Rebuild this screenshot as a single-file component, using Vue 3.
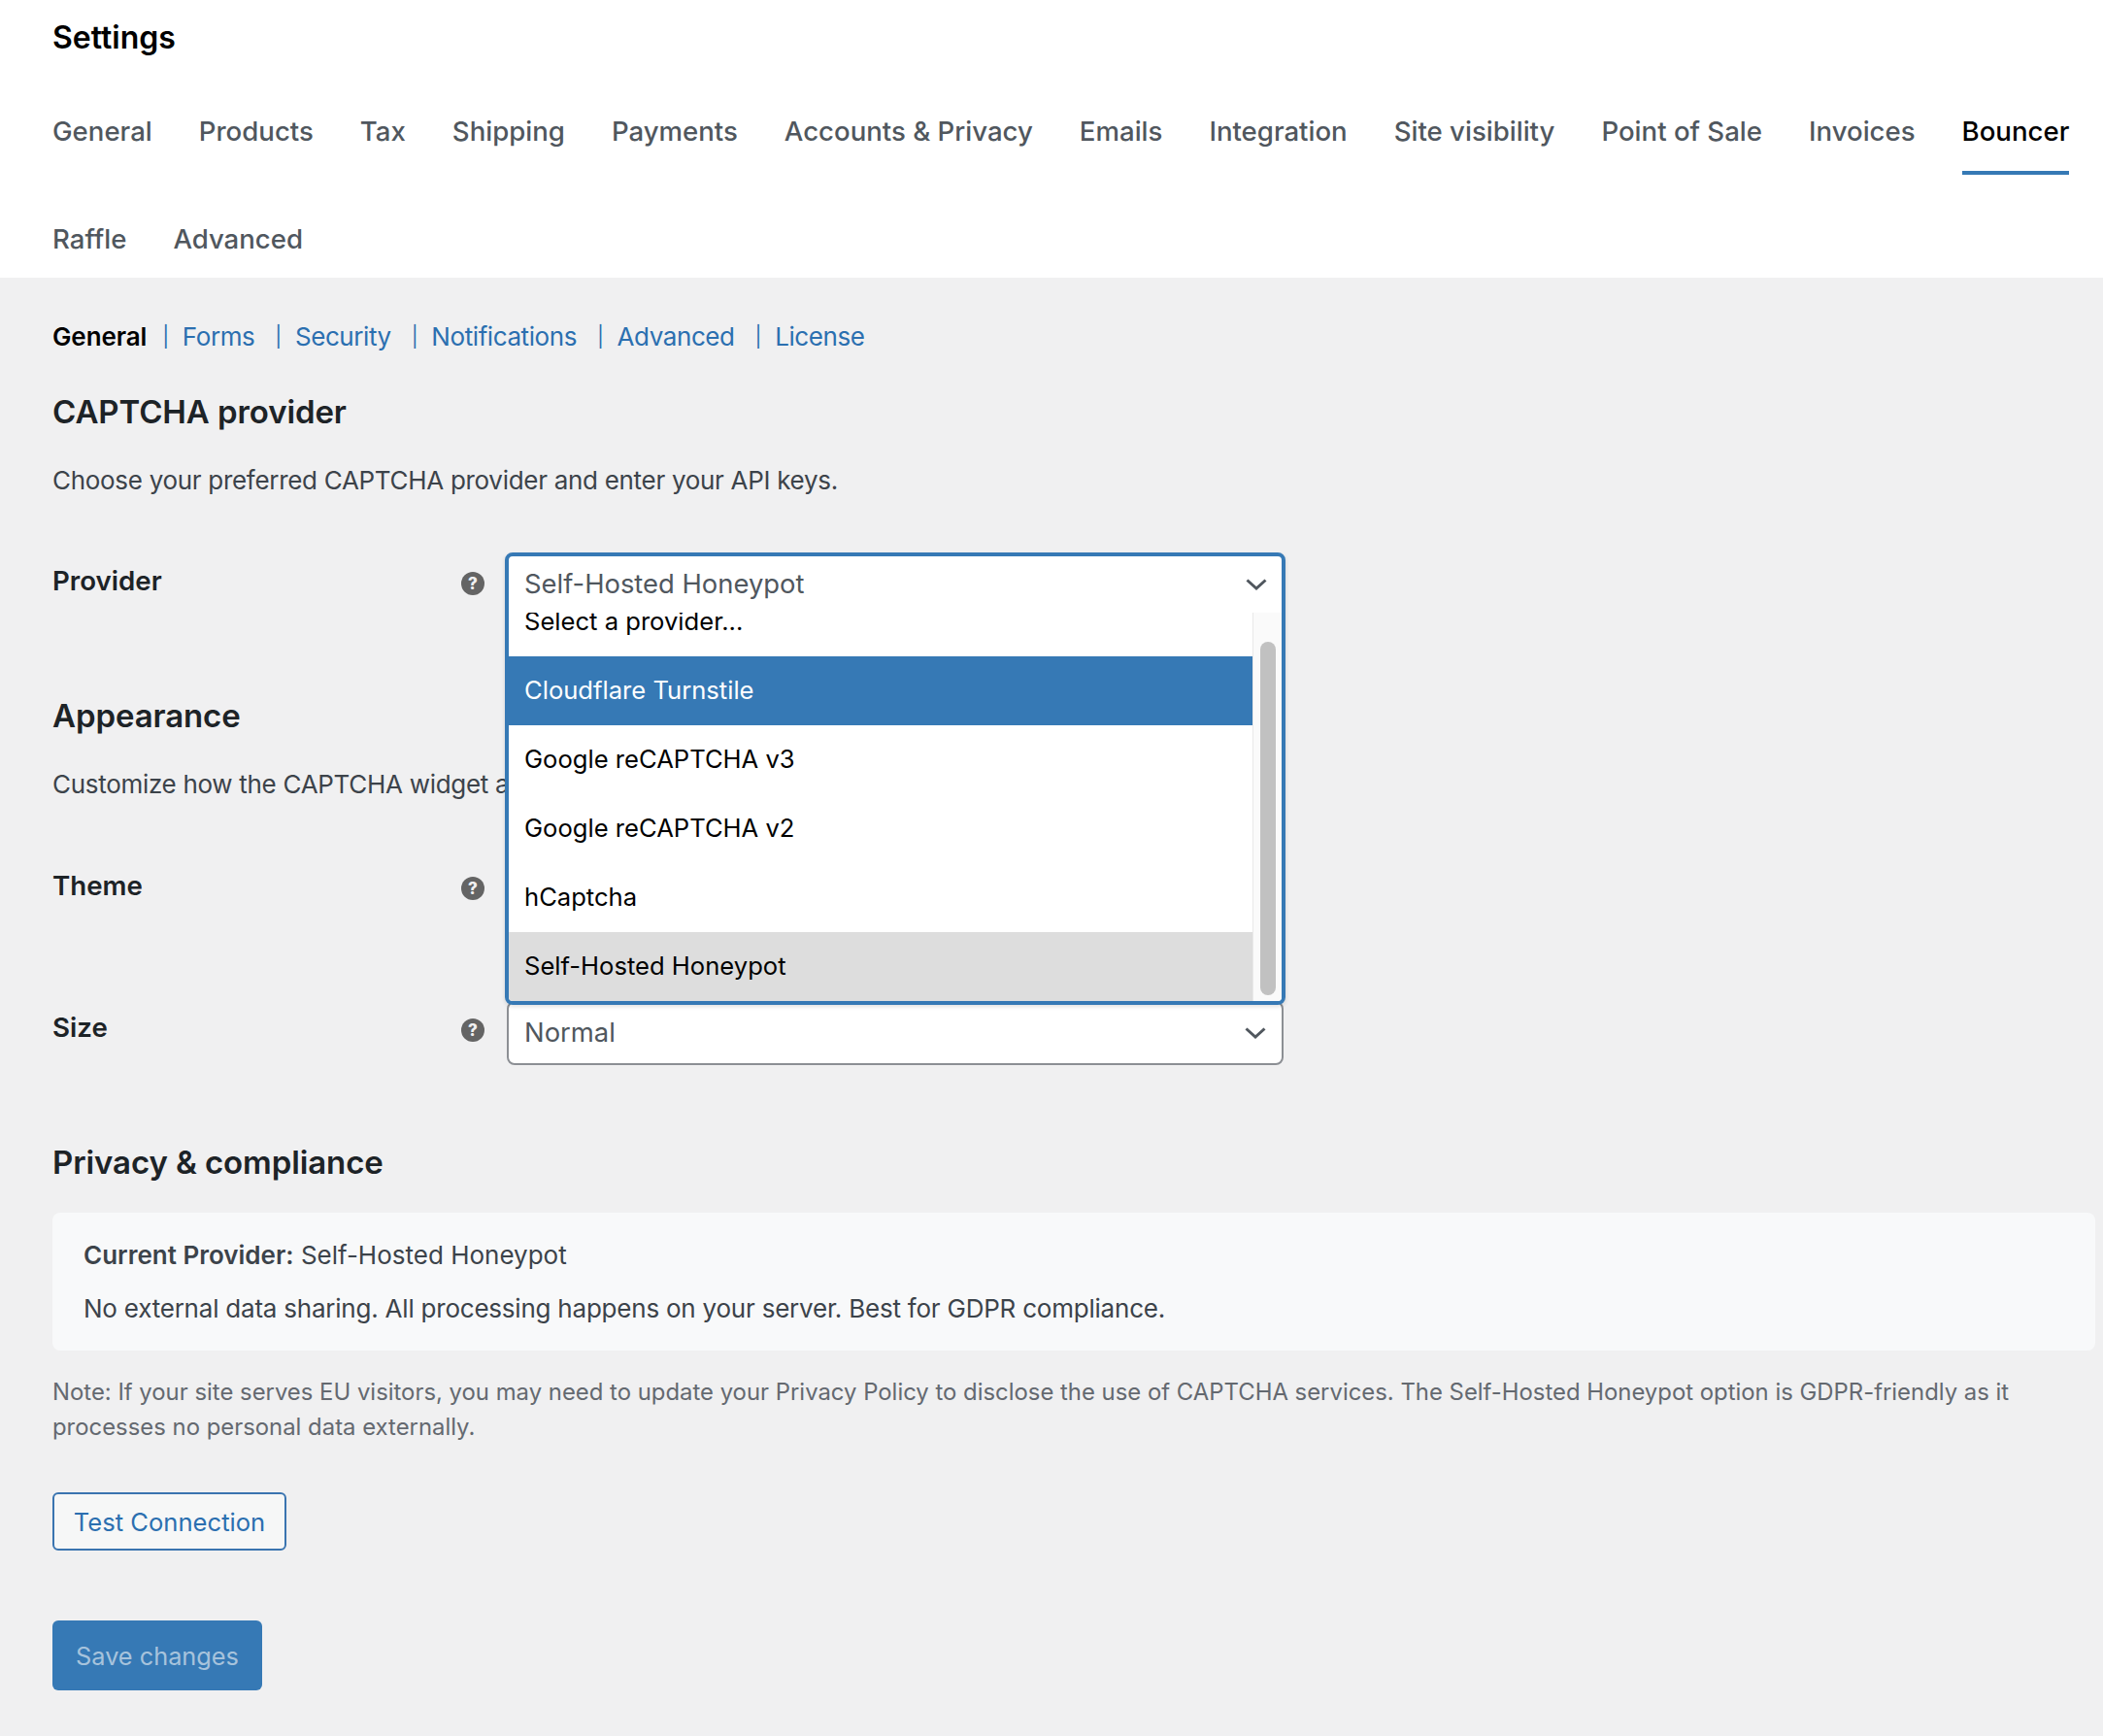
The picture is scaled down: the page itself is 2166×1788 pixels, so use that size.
<template>
  <div class="page">
    <header class="top">
      <h1 class="title">Settings</h1>
      <nav class="tabs">
        <a v-for="tab in tabs" :key="tab" class="tab" :class="{ active: tab === 'Bouncer' }">{{ tab }}</a>
      </nav>
    </header>

    <main class="content">
      <div class="subnav">
        <template v-for="(item, index) in subTabs" :key="item">
          <span v-if="index > 0" class="sep">|</span>
          <a :class="{ current: index === 0 }">{{ item }}</a>
        </template>
      </div>

      <h2 class="h-first">CAPTCHA provider</h2>
      <p class="desc">Choose your preferred CAPTCHA provider and enter your API keys.</p>

      <div class="row row-provider">
        <label class="label">Provider</label>
        <span class="help">?</span>
        <div class="field">
          <div class="select">
            <span>Self-Hosted Honeypot</span>
            <svg class="chev" viewBox="0 0 22 12"><polyline points="1.5,1.5 11,10 20.5,1.5" /></svg>
          </div>
          <!-- open list sits over the rows below -->
          <div class="dropdown">
            <div class="dd-head">
              <span>Self-Hosted Honeypot</span>
              <svg class="chev" viewBox="0 0 22 12"><polyline points="1.5,1.5 11,10 20.5,1.5" /></svg>
            </div>
            <div class="dd-body">
              <ul class="options">
                <li
                  v-for="opt in providers"
                  :key="opt"
                  :class="{ hover: opt === 'Cloudflare Turnstile', chosen: opt === 'Self-Hosted Honeypot' }"
                >{{ opt }}</li>
              </ul>
              <div class="track"><div class="thumb"></div></div>
            </div>
          </div>
        </div>
      </div>

      <h2 class="h-appearance">Appearance</h2>
      <p class="desc desc-2">Customize how the CAPTCHA widget appears on your site.</p>

      <div class="row row-theme">
        <label class="label">Theme</label>
        <span class="help">?</span>
        <div class="field">
          <div class="select">
            <span>Auto</span>
            <svg class="chev" viewBox="0 0 22 12"><polyline points="1.5,1.5 11,10 20.5,1.5" /></svg>
          </div>
        </div>
      </div>

      <div class="row row-size">
        <label class="label">Size</label>
        <span class="help">?</span>
        <div class="field">
          <div class="select">
            <span>Normal</span>
            <svg class="chev" viewBox="0 0 22 12"><polyline points="1.5,1.5 11,10 20.5,1.5" /></svg>
          </div>
        </div>
      </div>

      <h2 class="h-privacy">Privacy &amp; compliance</h2>
      <div class="notice">
        <p class="current-line"><strong>Current Provider:</strong> Self-Hosted Honeypot</p>
        <p>No external data sharing. All processing happens on your server. Best for GDPR compliance.</p>
      </div>
      <p class="note">
        Note: If your site serves EU visitors, you may need to update your Privacy Policy to disclose the use of CAPTCHA services. The Self-Hosted Honeypot option is GDPR-friendly as it processes no personal data externally.
      </p>

      <button class="btn-test" type="button">Test Connection</button>
      <button class="btn-save" type="button">Save changes</button>
    </main>
  </div>
</template>

<script setup>
const tabs = [
  "General",
  "Products",
  "Tax",
  "Shipping",
  "Payments",
  "Accounts & Privacy",
  "Emails",
  "Integration",
  "Site visibility",
  "Point of Sale",
  "Invoices",
  "Bouncer",
  "Raffle",
  "Advanced",
];

const subTabs = ["General", "Forms", "Security", "Notifications", "Advanced", "License"];

const providers = [
  "Select a provider...",
  "Cloudflare Turnstile",
  "Google reCAPTCHA v3",
  "Google reCAPTCHA v2",
  "hCaptcha",
  "Self-Hosted Honeypot",
];
</script>

<style>
html,
body {
  margin: 0;
  background: #f0f0f1;
}
</style>

<style scoped>
.page {
  min-height: 1788px;
  background: #f0f0f1;
  color: #3c434a;
  font-family: Inter, "Liberation Sans", sans-serif;
  font-size: 26px;
}

.top {
  height: 286px;
  box-sizing: border-box;
  padding: 0 20px 0 54px;
  background: #fff;
}

.title {
  margin: 0;
  height: 78px;
  line-height: 78px;
  font-size: 32px;
  font-weight: 600;
  color: #000;
}

.tabs {
  display: flex;
  flex-wrap: wrap;
  column-gap: 48px;
  row-gap: 22px;
  margin-top: 13px;
}

.tab {
  height: 89px;
  line-height: 89px;
  font-size: 27.58px;
  font-weight: 500;
  color: #50575e;
}

.tab.active {
  color: #000;
  height: 85px;
  border-bottom: 4px solid #3679b5;
}

.content {
  padding: 43px 8px 0 54px;
}

.subnav {
  display: flex;
  align-items: center;
  height: 36px;
  line-height: 36px;
  font-size: 26px;
  letter-spacing: -0.42px;
  color: #2b6fb0;
}

.subnav .current {
  margin-right: -5px;
  color: #000;
  font-weight: 600;
  letter-spacing: -0.1px;
}

.sep {
  margin: 0 14px 0 21px;
  font-size: 21px;
}

h2 {
  margin: 0;
  height: 44px;
  line-height: 44px;
  font-size: 33px;
  font-weight: 600;
  letter-spacing: -0.1px;
  color: #1d2327;
}

.h-first {
  margin-top: 37px;
}

.h-appearance {
  margin-top: 78px;
}

.h-privacy {
  margin-top: 78px;
}

.desc {
  margin: 29px 0 0;
  line-height: 40px;
  font-size: 26px;
  letter-spacing: -0.3px;
  color: #3c434a;
}

.desc-2 {
  margin-top: 29px;
}

.row {
  display: flex;
  height: 66px;
  position: relative;
}

.row-provider {
  margin-top: 56px;
}

.row-theme {
  margin-top: 57px;
}

.row-size {
  margin-top: 80px;
}

.label {
  width: 421px;
  padding-top: 6.5px;
  line-height: 40px;
  font-size: 27.7px;
  font-weight: 600;
  color: #1d2327;
}

.help {
  width: 24px;
  height: 24px;
  margin: 18px 23px 0 0;
  border-radius: 50%;
  background: #646464;
  color: #f0f0f1;
  font-size: 17px;
  font-weight: 800;
  line-height: 24px;
  text-align: center;
}

.field {
  position: relative;
  width: 800px;
}

.select {
  display: flex;
  align-items: center;
  justify-content: space-between;
  box-sizing: border-box;
  height: 66px;
  padding: 0 16px 0 16px;
  background: #fff;
  border: 2px solid #8c8f94;
  border-radius: 8px;
  font-size: 27.4px;
  color: #50575e;
}

.select span,
.dd-head span {
  margin-top: -2px;
}

.chev {
  width: 22px;
  height: 12px;
  fill: none;
  stroke: #50575e;
  stroke-width: 3;
}

.dropdown {
  position: absolute;
  z-index: 5;
  top: -2px;
  left: -2px;
  box-sizing: border-box;
  width: 804px;
  height: 466px;
  overflow: hidden;
  background: #fff;
  border: 4px solid #3679b5;
  border-radius: 8px;
  box-shadow: 0 2px 4px rgba(0, 0, 0, 0.12);
}

.dd-head {
  display: flex;
  align-items: center;
  justify-content: space-between;
  height: 58px;
  padding: 0 15px 0 16px;
  font-size: 27.4px;
  color: #50575e;
}

.dd-body {
  display: flex;
  height: 400px;
  overflow: hidden;
}

.options {
  flex: 1;
  margin: -26px 0 0;
  padding: 0;
  list-style: none;
  font-size: 25.6px;
  color: #000;
}

.options li {
  height: 71px;
  line-height: 70px;
  padding-left: 16px;
}

.options li.hover {
  background: #3679b5;
  color: #fff;
}

.options li.chosen {
  background: #ddd;
}

.track {
  box-sizing: border-box;
  width: 30px;
  padding: 30px 6px 0 7px;
  background: #fafafa;
  border-left: 1px solid #e8e8e8;
}

.thumb {
  height: 364px;
  border-radius: 8px;
  background: #c1c1c1;
}

.notice {
  box-sizing: border-box;
  height: 142px;
  margin-top: 30px;
  padding: 30px 32px;
  background: #f8f9fa;
  border-radius: 8px;
  font-size: 26px;
  letter-spacing: -0.22px;
  color: #3c434a;
}

.notice p {
  margin: 0 0 27px;
  line-height: 28px;
}

.notice .current-line {
  letter-spacing: 0;
}

.notice strong {
  font-weight: 600;
}

.note {
  margin: 25px 0 0;
  line-height: 36px;
  font-size: 23.88px;
  color: #646970;
}

.btn-test {
  display: block;
  box-sizing: border-box;
  width: 241px;
  height: 60px;
  margin-top: 49px;
  padding: 0;
  background: #f6f7f7;
  border: 2px solid #3a74b0;
  border-radius: 6px;
  color: #2b6fb0;
  font-family: inherit;
  font-size: 25.6px;
}

.btn-save {
  display: block;
  box-sizing: border-box;
  width: 216px;
  height: 72px;
  margin-top: 72px;
  padding: 0;
  background: #3679b5;
  border: none;
  border-radius: 6px;
  color: #a7c3dc;
  font-family: inherit;
  font-size: 25.3px;
}
</style>
